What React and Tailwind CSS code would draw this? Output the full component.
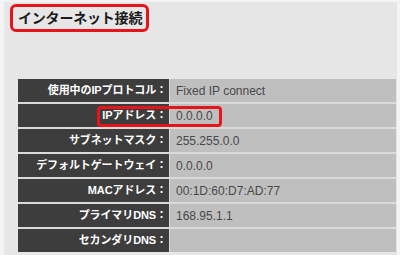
const rows = [
  { label: "使用中のIPプロトコル：", value: "Fixed IP connect" },
  { label: "IPアドレス：", value: "0.0.0.0" },
  { label: "サブネットマスク：", value: "255.255.0.0" },
  { label: "デフォルトゲートウェイ：", value: "0.0.0.0" },
  { label: "MACアドレス：", value: "00:1D:60:D7:AD:77" },
  { label: "プライマリDNS：", value: "168.95.1.1" },
  { label: "セカンダリDNS：", value: "" },
];

export default function App() {
  return (
    <div className="w-[400px] h-[255px] bg-[#f4f4f4] overflow-hidden font-['Liberation_Sans','Noto_Sans_CJK_JP',sans-serif]">
      <div className="ml-[4px] mr-[3px] mt-[2px] h-[253px] bg-[#e6e6e6] pt-[2px]">
        {/* title with red marker */}
        <div className="ml-[6px] inline-flex h-[28px] items-center rounded-[6px] border-[3px] border-[#e8141b] pl-[5px] pr-[4px]">
          <span className="text-[14px] font-bold tracking-[-0.2px] text-[#1a1a1a]">
            インターネット接続
          </span>
        </div>

        <div className="relative ml-[14px] mt-[47px] w-[378px] flex flex-col gap-[2px] bg-[#dadada]">
          {rows.map((r) => (
            <div key={r.label} className="flex h-[23px] gap-[1px]">
              <div className="w-[151px] bg-[#3d3d3d] flex items-center justify-end pr-[2px] text-[11px] font-bold text-white tracking-[-0.1px]">
                {r.label}
              </div>
              <div className="flex-1 bg-[#bfbfbf] flex items-center pl-[6px] text-[12px] text-[#484848]">
                {r.value}
              </div>
            </div>
          ))}
          {/* red highlight around IP address row */}
          <div className="absolute left-[79px] top-[27px] w-[125px] h-[21px] rounded-[4px] border-[3px] border-[#e8141b]" />
        </div>
      </div>
    </div>
  );
}
